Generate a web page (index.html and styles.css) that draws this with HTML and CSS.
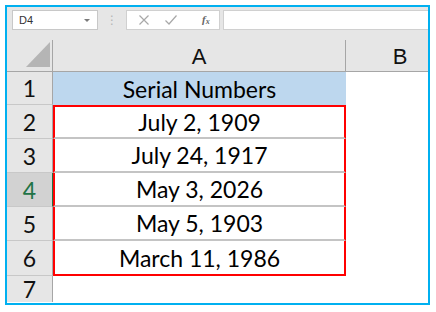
FILE: index.html
```html
<!DOCTYPE html>
<html>
<head>
<meta charset="utf-8">
<link rel="stylesheet" href="styles.css">
</head>
<body>
<div class="frame">
  <div class="toolbar">
    <div class="namebox"><span class="ref">D4</span><span class="caret"></span></div>
    <div class="sep">⋮</div>
    <div class="funcbox">
      <svg class="ico" width="12" height="12" viewBox="0 0 12 12"><path d="M1.5 1.5 L10.5 10.5 M10.5 1.5 L1.5 10.5" stroke="#a8a8a8" stroke-width="1.2" fill="none"/></svg>
      <svg class="ico" width="14" height="12" viewBox="0 0 14 12"><path d="M1.5 6.5 L5 10 L12.5 1.5" stroke="#a8a8a8" stroke-width="1.2" fill="none"/></svg>
      <span class="fx">f<sub>x</sub></span>
    </div>
    <div class="formula"></div>
  </div>
  <div class="sheet">
    <div class="corner"><span class="tri"></span></div>
    <div class="colhead">A</div>
    <div class="colhead colb">B</div>

    <div class="rowhead">1</div>
    <div class="cell title">Serial Numbers</div>
    <div class="cell blank"></div>

    <div class="rowhead">2</div>
    <div class="cell box first">July 2, 1909</div>
    <div class="cell blank"></div>

    <div class="rowhead">3</div>
    <div class="cell box">July 24, 1917</div>
    <div class="cell blank"></div>

    <div class="rowhead active">4</div>
    <div class="cell box">May 3, 2026</div>
    <div class="cell blank"></div>

    <div class="rowhead">5</div>
    <div class="cell box">May 5, 1903</div>
    <div class="cell blank"></div>

    <div class="rowhead">6</div>
    <div class="cell box last">March 11, 1986</div>
    <div class="cell blank"></div>

    <div class="rowhead lastrow">7</div>
    <div class="cell blank"></div>
    <div class="cell blank"></div>
  </div>
</div>
</body>
</html>
```
FILE: styles.css
```css
html, body {
  margin: 0;
  padding: 0;
  background: #ffffff;
}
body {
  width: 436px;
  height: 312px;
  overflow: hidden;
  font-family: Lato, "Open Sans", sans-serif;
}
.frame {
  margin: 5px 0 0 5px;
  width: 421px;
  height: 296px;
  border: 2px solid #00b0f0;
  overflow: hidden;
  background: #ffffff;
}
.toolbar {
  height: 33px;
  background: #e6e6e6;
  display: flex;
  align-items: flex-start;
  padding-top: 3px;
  box-sizing: border-box;
}
.namebox {
  margin-left: 5px;
  width: 86px;
  height: 20px;
  box-sizing: border-box;
  background: #fff;
  border: 1px solid #c8c8c8;
  display: flex;
  align-items: center;
  justify-content: space-between;
  padding: 0 6px 0 6px;
}
.ref {
  font-family: "Liberation Sans", Arial, sans-serif;
  font-size: 11px;
  color: #333;
}
.caret {
  width: 0;
  height: 0;
  border-left: 3px solid transparent;
  border-right: 3px solid transparent;
  border-top: 3px solid #7a7a7a;
  margin-right: 1px;
}
.sep {
  width: 28px;
  text-align: center;
  color: #b4b4b4;
  font-size: 12px;
  line-height: 20px;
  font-family: "DejaVu Sans", sans-serif;
}
.funcbox {
  width: 94px;
  height: 20px;
  box-sizing: border-box;
  background: #fff;
  border: 1px solid #d0d0d0;
  display: flex;
  align-items: center;
  padding-left: 11px;
  gap: 14px;
}
.fx {
  margin-left: 10px;
  font-family: "Liberation Serif", serif;
  font-style: italic;
  font-weight: bold;
  font-size: 11px;
  color: #666;
  line-height: 1;
}
.fx sub {
  font-size: 8px;
  vertical-align: -1px;
}
.formula {
  margin-left: 3px;
  flex: 1;
  height: 20px;
  box-sizing: border-box;
  background: #fff;
  border: 1px solid #d0d0d0;
  border-right: none;
}
.sheet {
  display: grid;
  grid-template-columns: 46px 293px 108px;
  grid-template-rows: 32px 33px 34px 34px 34px 34px 35px 26px;
  width: 447px;
}
.corner, .colhead, .rowhead {
  background: #e6e6e6;
  box-sizing: border-box;
}
.corner {
  border-right: 1px solid #a6a6a6;
  border-bottom: 1px solid #a6a6a6;
  position: relative;
}
.tri {
  position: absolute;
  left: 19px;
  top: 2px;
  width: 0;
  height: 0;
  border-left: 24px solid transparent;
  border-bottom: 25px solid #b5b5b5;
}
.colhead {
  border-right: 1px solid #a6a6a6;
  border-bottom: 1px solid #a6a6a6;
  display: flex;
  align-items: center;
  justify-content: center;
  font-family: "Liberation Sans", Arial, sans-serif;
  font-size: 22px;
  color: #111;
  padding-top: 2px;
}
.colb {
  border-right: none;
}
.rowhead {
  border-right: 1px solid #a6a6a6;
  border-bottom: 1px solid #c8c8c8;
  display: flex;
  align-items: center;
  justify-content: center;
  font-size: 23px;
  color: #111;
}
.rowhead.active {
  background: #d2d2d2;
  color: #217346;
  border-right: 1px solid #217346;
}
.rowhead.lastrow {
  border-bottom: none;
}
.cell {
  box-sizing: border-box;
  display: flex;
  align-items: center;
  justify-content: center;
  font-size: 23px;
  color: #000;
}
.title {
  background: #bdd7ee;
}
.box {
  border-left: 2px solid #ff0000;
  border-right: 2px solid #ff0000;
  border-bottom: 2px solid #c4c4c4;
}
.box.first {
  border-top: 2px solid #ff0000;
}
.box.last {
  border-bottom: 2px solid #ff0000;
}
```
